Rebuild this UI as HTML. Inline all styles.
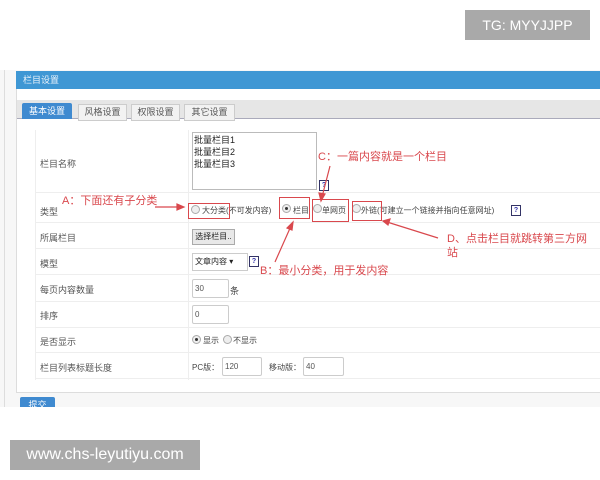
<!DOCTYPE html>
<html><head><meta charset="utf-8"><style>
body{margin:0;width:600px;height:480px;background:#fff;position:relative;overflow:hidden;font-family:"Liberation Sans","Noto Sans CJK SC",sans-serif;font-size:9px;color:#444}
.a{position:absolute}
.red{color:#d9484d;font-size:11px}
.box{position:absolute;border:1px solid #d9484d}
.inp{position:absolute;border:1px solid #ccc;border-radius:2px;background:#fff;font-size:8px;line-height:17px;padding-left:2px;color:#555}
.row{position:absolute;left:35px;width:565px;border-bottom:1px solid #eee}
.lb{position:absolute;left:40px;color:#555}
.rd{position:absolute;width:7px;height:7px;border:1px solid #aaa;border-radius:50%;background:#eee}
.rd.on::after{content:"";position:absolute;left:2px;top:2px;width:3px;height:3px;border-radius:50%;background:#333}
.t8{position:absolute;font-size:8px;color:#444;white-space:nowrap}
</style></head><body>
<div class="a" style="left:465px;top:10px;width:125px;height:30px;background:#a9a9a9;color:#fff;font-size:14px;line-height:30px;text-align:center">TG: MYYJJPP</div>
<div class="a" style="left:0;top:70px;width:600px;height:337px;background:#f7f7f7"></div>
<div class="a" style="left:4px;top:70px;width:1px;height:337px;background:#ddd"></div>
<div class="a" style="left:16px;top:71px;width:584px;height:321px;background:#fff;border-left:1px solid #ddd;border-bottom:1px solid #ddd"></div>
<div class="a" style="left:16px;top:71px;width:584px;height:18px;background:#3f97d4;color:#e8f2fa;line-height:18px;padding-left:7px;box-sizing:border-box">栏目设置</div>
<div class="a" style="left:17px;top:100px;width:583px;height:18px;background:#e6e6e6;border-bottom:1px solid #aab"></div>
<div class="a" style="left:22px;top:103px;width:50px;height:16px;background:#3f8ad0;color:#fff;text-align:center;line-height:16px;border-radius:2px 2px 0 0">基本设置</div>
<div class="a" style="left:78px;top:104px;width:47px;height:15px;background:#f2f2f2;border:1px solid #ccc;text-align:center;line-height:15px;color:#555">风格设置</div>
<div class="a" style="left:131px;top:104px;width:47px;height:15px;background:#f2f2f2;border:1px solid #ccc;text-align:center;line-height:15px;color:#555">权限设置</div>
<div class="a" style="left:184px;top:104px;width:49px;height:15px;background:#f2f2f2;border:1px solid #ccc;text-align:center;line-height:15px;color:#555">其它设置</div>
<div class="a" style="left:35px;top:130px;width:1px;height:250px;background:#eee"></div>
<div class="a" style="left:188px;top:130px;width:1px;height:250px;background:#eee"></div>
<div class="row" style="top:130px;height:62px"></div><div class="lb" style="top:157px">栏目名称</div>
<div class="row" style="top:193px;height:29px"></div><div class="lb" style="top:205px">类型</div>
<div class="row" style="top:223px;height:25px"></div><div class="lb" style="top:231px">所属栏目</div>
<div class="row" style="top:249px;height:25px"></div><div class="lb" style="top:257px">模型</div>
<div class="row" style="top:275px;height:26px"></div><div class="lb" style="top:283px">每页内容数量</div>
<div class="row" style="top:302px;height:25px"></div><div class="lb" style="top:309px">排序</div>
<div class="row" style="top:328px;height:24px"></div><div class="lb" style="top:335px">是否显示</div>
<div class="row" style="top:353px;height:25px"></div><div class="lb" style="top:361px">栏目列表标题长度</div>
<div class="a" style="left:192px;top:132px;width:121px;height:54px;border:1px solid #bbb;font-size:9px;line-height:12px;color:#222;padding:1px">批量栏目1<br>批量栏目2<br>批量栏目3</div>
<div class="a" style="left:319px;top:180px;width:8px;height:9px;border:1px solid #336;color:#33a;font-size:7px;line-height:9px;text-align:center;font-weight:bold">?</div>
<div class="rd" style="left:191px;top:205px"></div><div class="t8" style="left:202px;top:205px">大分类(不可发内容)</div>
<div class="rd on" style="left:282px;top:204px"></div><div class="t8" style="left:293px;top:205px">栏目</div>
<div class="rd" style="left:313px;top:204px"></div><div class="t8" style="left:322px;top:205px">单网页</div>
<div class="rd" style="left:352px;top:204px"></div><div class="t8" style="left:361px;top:205px">外链(可建立一个链接并指向任意网址)</div>
<div class="a" style="left:511px;top:205px;width:8px;height:9px;border:1px solid #336;color:#33a;font-size:7px;line-height:9px;text-align:center;font-weight:bold">?</div>
<div class="box" style="left:188px;top:203px;width:40px;height:14px"></div>
<div class="box" style="left:279px;top:197px;width:29px;height:20px"></div>
<div class="box" style="left:312px;top:199px;width:35px;height:21px"></div>
<div class="box" style="left:352px;top:201px;width:28px;height:18px"></div>
<div class="a" style="left:192px;top:229px;width:41px;height:14px;background:#e8e8e8;border:1px solid #aaa;font-size:8px;line-height:14px;text-align:center;color:#222">选择栏目..</div>
<div class="a" style="left:192px;top:253px;width:52px;height:16px;border:1px solid #ccc;font-size:8px;line-height:16px;padding-left:2px;color:#222">文章内容 ▾</div>
<div class="a" style="left:249px;top:256px;width:8px;height:9px;border:1px solid #336;color:#33a;font-size:7px;line-height:9px;text-align:center;font-weight:bold">?</div>
<div class="inp" style="left:192px;top:279px;width:33px;height:17px">30</div><div class="a" style="left:230px;top:284px">条</div>
<div class="inp" style="left:192px;top:305px;width:33px;height:17px">0</div>
<div class="rd on" style="left:192px;top:335px"></div><div class="t8" style="left:203px;top:335px">显示</div>
<div class="rd" style="left:223px;top:335px"></div><div class="t8" style="left:233px;top:335px">不显示</div>
<div class="a" style="left:192px;top:362px;font-size:8px">PC版：</div>
<div class="inp" style="left:222px;top:357px;width:36px;height:17px">120</div>
<div class="a" style="left:269px;top:362px;font-size:8px">移动版：</div>
<div class="inp" style="left:303px;top:357px;width:37px;height:17px">40</div>
<div class="a" style="left:20px;top:397px;width:35px;height:12px;background:#3f8ad0;border-radius:2px 2px 0 0;color:#fff;text-align:center;line-height:16px;font-size:9px;overflow:hidden">提交</div>
<div class="a" style="left:0;top:407px;width:600px;height:73px;background:#fff"></div>
<div class="a red" style="left:62px;top:192px">A：下面还有子分类</div>
<div class="a red" style="left:318px;top:148px">C：一篇内容就是一个栏目</div>
<div class="a red" style="left:260px;top:262px">B：最小分类，用于发内容</div>
<div class="a red" style="left:447px;top:232px;line-height:14px">D、点击栏目就跳转第三方网<br>站</div>
<svg class="a" style="left:0;top:0" width="600" height="480"><g stroke="#d9484d" stroke-width="1.2" fill="#d9484d">
<line x1="155" y1="207" x2="180" y2="207"/><polygon points="184,207 177,204 177,210"/>
<line x1="275" y1="262" x2="291" y2="226"/><polygon points="293,222 287,228 292,230"/>
<line x1="330" y1="166" x2="322" y2="197"/><polygon points="321,201 319,193 325,194"/>
<line x1="438" y1="238" x2="387" y2="222"/><polygon points="383,221 390,219 388,225"/>
</g></svg>
<div class="a" style="left:10px;top:440px;width:190px;height:30px;background:#a9a9a9;color:#fff;font-size:16px;line-height:30px;text-align:center">www.chs-leyutiyu.com</div>
</body></html>
